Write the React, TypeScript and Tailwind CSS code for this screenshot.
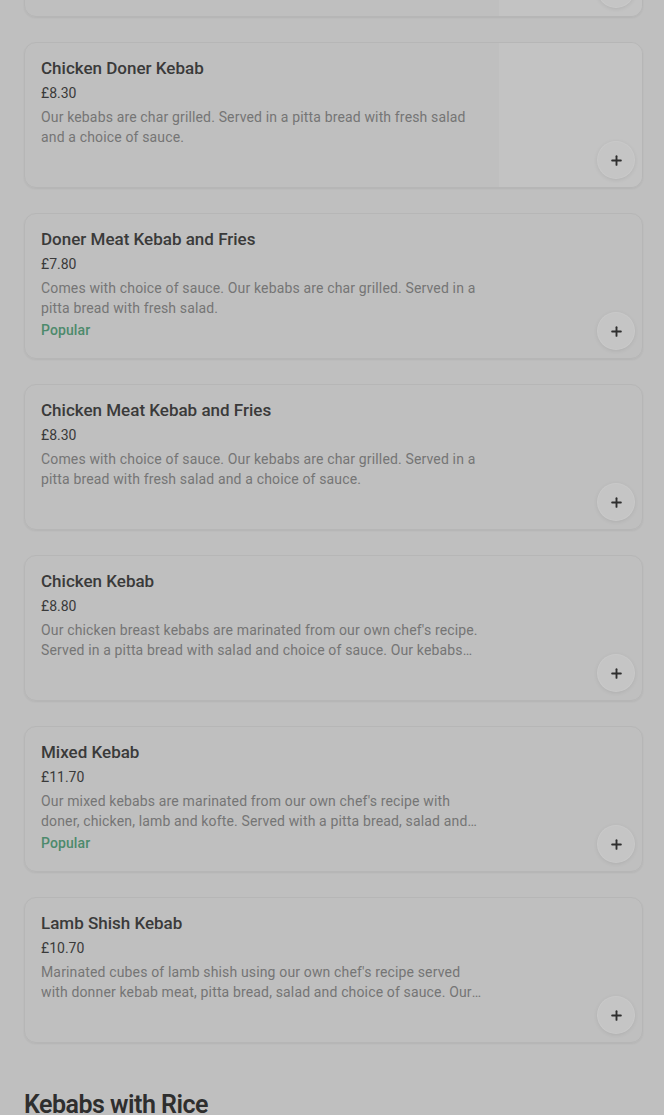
import { Plus } from 'lucide-react'

interface Item {
  name: string
  price: string
  desc: string
  popular?: boolean
  image?: boolean
}

const items: Item[] = [
  {
    name: 'Chicken Doner Kebab',
    price: '£8.30',
    desc: 'Our kebabs are char grilled. Served in a pitta bread with fresh salad and a choice of sauce.',
    image: true,
  },
  {
    name: 'Doner Meat Kebab and Fries',
    price: '£7.80',
    desc: 'Comes with choice of sauce. Our kebabs are char grilled. Served in a pitta bread with fresh salad.',
    popular: true,
  },
  {
    name: 'Chicken Meat Kebab and Fries',
    price: '£8.30',
    desc: 'Comes with choice of sauce. Our kebabs are char grilled. Served in a pitta bread with fresh salad and a choice of sauce.',
  },
  {
    name: 'Chicken Kebab',
    price: '£8.80',
    desc: "Our chicken breast kebabs are marinated from our own chef's recipe. Served in a pitta bread with salad and choice of sauce. Our kebabs are char grilled.",
  },
  {
    name: 'Mixed Kebab',
    price: '£11.70',
    desc: "Our mixed kebabs are marinated from our own chef's recipe with doner, chicken, lamb and kofte. Served with a pitta bread, salad and choice of sauce.",
    popular: true,
  },
  {
    name: 'Lamb Shish Kebab',
    price: '£10.70',
    desc: "Marinated cubes of lamb shish using our own chef's recipe served with donner kebab meat, pitta bread, salad and choice of sauce. Our kebabs are char grilled.",
  },
]

function AddButton() {
  return (
    <button className="absolute bottom-[9px] right-2 w-9 h-9 rounded-full bg-[#c5c5c5] flex items-center justify-center shadow-[0_1px_5px_rgba(0,0,0,0.12)] ring-1 ring-[#c9c9c9]">
      <Plus size={15} strokeWidth={3} className="text-[#2f2f2f]" />
    </button>
  )
}

function MenuCard({ item }: { item: Item }) {
  return (
    <div className="flex h-[146px] rounded-xl border border-[#b6b6b6] shadow-[0_1px_2px_rgba(0,0,0,0.06)] overflow-hidden">
      <div className="flex-1 min-w-0 px-4 pt-[15px]">
        <h3 className="text-[17px] leading-5 font-medium text-[#3a3a3a]">{item.name}</h3>
        <p className="mt-[5px] text-[14px] leading-5 text-[#3a3a3a]">{item.price}</p>
        <p className="mt-1 text-[14px] leading-5 tracking-[0.15px] text-[#757575] line-clamp-2">{item.desc}</p>
        {item.popular && <p className="mt-[2px] text-[14px] leading-5 font-medium tracking-[0.1px] text-[#4d8a6c]">Popular</p>}
      </div>
      <div className={`relative w-[143px] shrink-0 ${item.image ? 'bg-[#c3c3c3]' : ''}`}>
        <AddButton />
      </div>
    </div>
  )
}

export default function App() {
  return (
    <div className="min-h-screen bg-[#bfbfbf] pl-6 pr-[21px] overflow-hidden" style={{ fontFamily: 'Roboto, "Liberation Sans", sans-serif' }}>
      <div className="mt-[-129px] flex flex-col gap-[25px]">
        <MenuCard item={{ name: 'Doner Kebab', price: '£7.80', desc: 'Our kebabs are char grilled.', image: true }} />
        {items.map(item => (
          <MenuCard key={item.name} item={item} />
        ))}
      </div>
      <h2 className="mt-[46px] text-[25px] leading-8 font-semibold tracking-[-0.5px] text-[#2e2e2e]">Kebabs with Rice</h2>
      <div className="h-24" />
    </div>
  )
}
